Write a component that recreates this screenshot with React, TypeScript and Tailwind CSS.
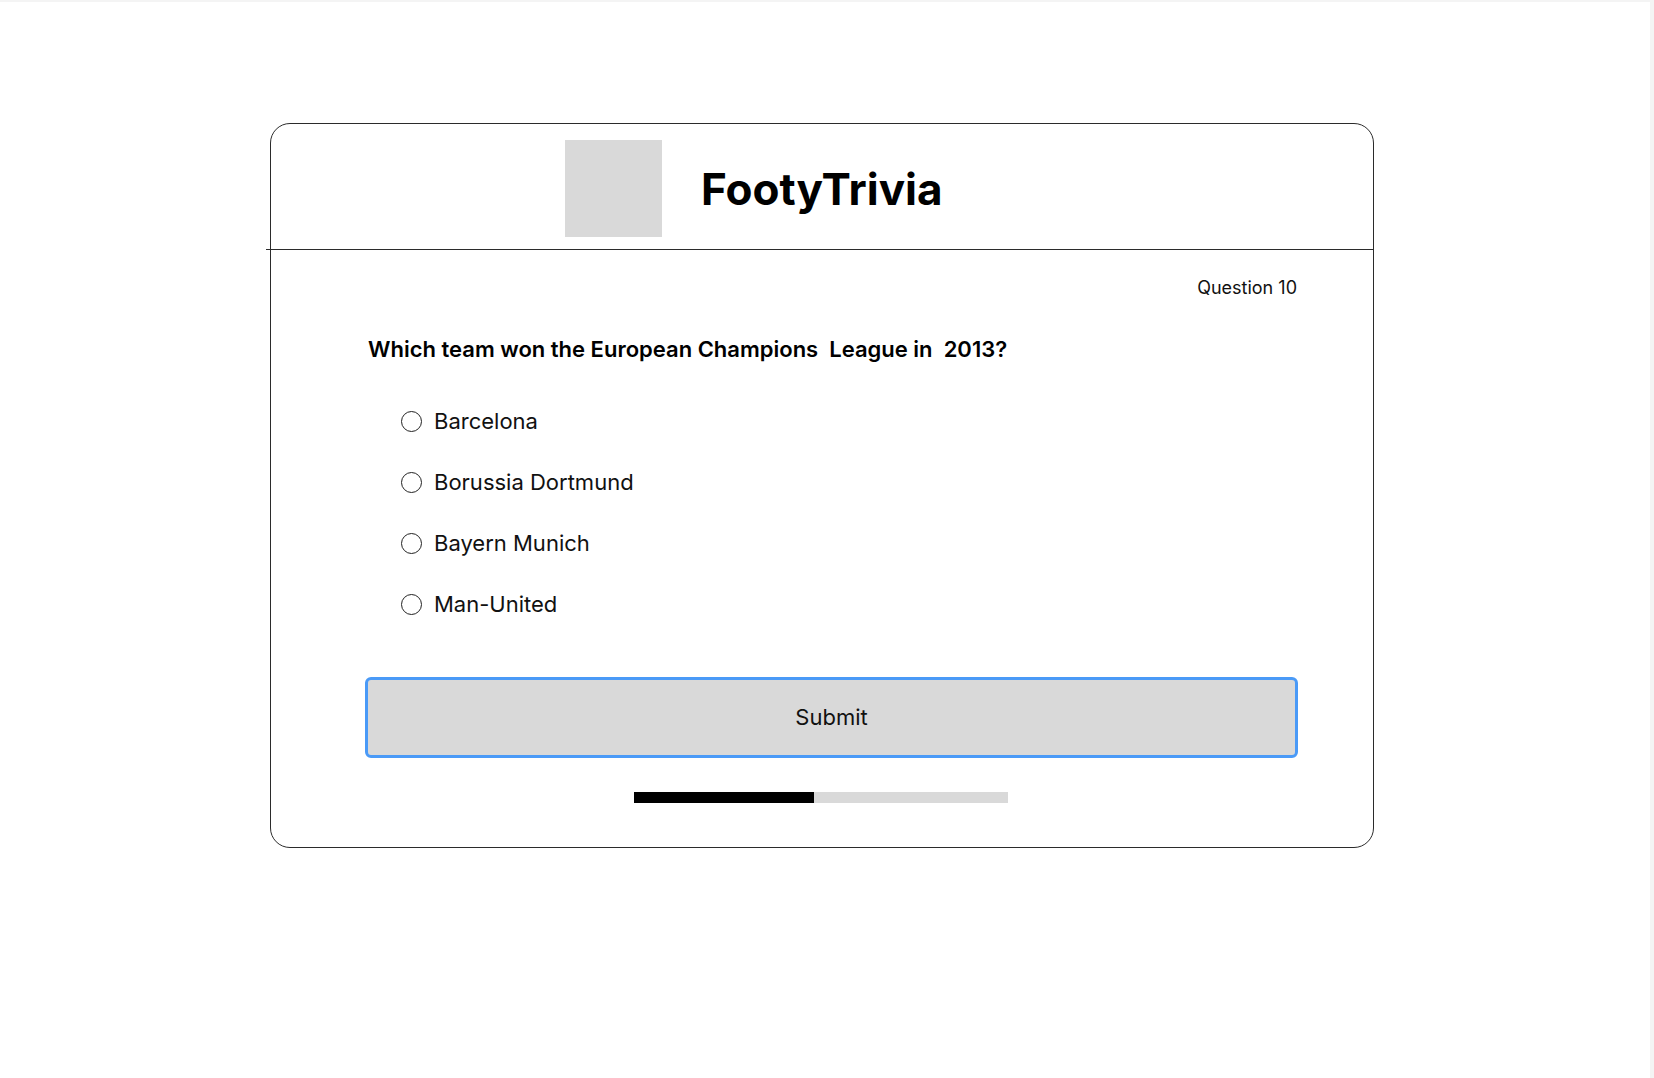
const options = ["Barcelona", "Borussia Dortmund", "Bayern Munich", "Man-United"];

function RadioOption({ label }: { label: string }) {
    return (
        <label className="flex items-center gap-[12px]">
            <span className="mt-px block size-[21px] shrink-0 rounded-full border border-[#222]" />
            <span className="text-[22px] leading-7 text-[#111]">{label}</span>
        </label>
    );
}

export default function App() {
    return (
        <div
            className="min-h-[1078px] border-t-2 border-r-4 border-[#f4f4f4] bg-white"
            style={{ fontFamily: "Inter, 'Noto Sans', sans-serif" }}
        >
            <section className="ml-[270px] mt-[121px] w-[1104px] rounded-[20px] border border-[#2b2b2b] bg-white">
                <header className="flex h-[125px] items-start pl-[294px] pt-4">
                    <div className="size-[97px] bg-[#d9d9d9]" />
                    <h1 className="ml-[39px] mt-[21px] text-[44px] font-bold leading-[56px] text-black">
                        FootyTrivia
                    </h1>
                </header>
                <div className="-ml-[5px] h-px bg-[#2b2b2b]" />

                <div className="pb-[44px] pl-[97px] pr-[76px]">
                    <p className="mt-[26px] text-right text-[18px] leading-6 text-[#111]">
                        Question 10
                    </p>
                    <h2 className="mt-[35px] whitespace-pre text-[22px] font-semibold leading-7 text-black">
                        {"Which team won the European Champions  League in  2013?"}
                    </h2>

                    <div className="ml-[33px] mt-[44px] flex flex-col gap-[33px]">
                        {options.map((option) => (
                            <RadioOption key={option} label={option} />
                        ))}
                    </div>

                    <button
                        className="-ml-[3px] mt-[59px] flex h-[81px] w-[933px] items-center justify-center rounded-md border-[3px] border-[#4a9af7] bg-[#d9d9d9] text-[22px] text-[#111]"
                        type="button"
                    >
                        Submit
                    </button>

                    <div className="ml-[266px] mt-[34px] flex h-[11px] w-[374px] bg-[#d9d9d9]">
                        <div className="h-full w-[180px] bg-black" />
                    </div>
                </div>
            </section>
        </div>
    );
}
